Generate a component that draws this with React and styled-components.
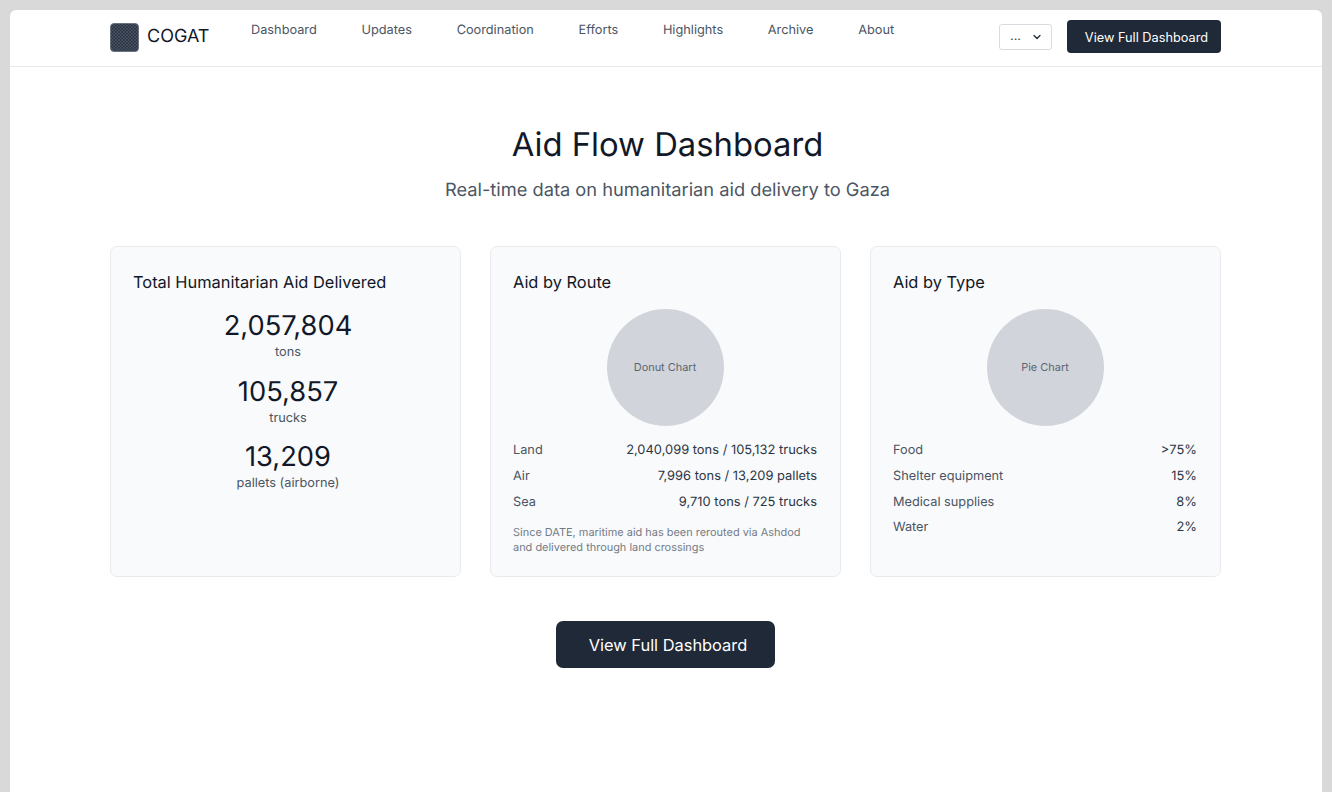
import React from "react";
import styled, { createGlobalStyle } from "styled-components";

const GlobalStyle = createGlobalStyle`
  html, body {
    margin: 0;
    height: 100%;
    background: #d9d9d9;
    font-family: Inter, "Liberation Sans", sans-serif;
    color: #111827;
    overflow: hidden;
    text-rendering: geometricPrecision;
  }
`;

const Page = styled.div`
  margin: 10px 10px 0;
  height: 782px;
  background: #fff;
  border-radius: 6px 6px 0 0;
  overflow: hidden;
`;

const Header = styled.header`
  height: 56px;
  padding: 0 101px 0 100px;
  display: flex;
  align-items: flex-start;
  border-bottom: 1px solid #e8eaee;
`;

const Brand = styled.div`
  display: flex;
  align-items: center;
  gap: 8px;
  margin-top: 12px;
  width: 141px;
  font-size: 18px;
  line-height: 30px;
  color: #111827;
`;

const Logo = styled.div`
  width: 29px;
  height: 29px;
  border-radius: 4px;
  background-color: #4b5563;
  background-image: radial-gradient(#263041 0.75px, transparent 0.85px),
    radial-gradient(#263041 0.75px, transparent 0.85px);
  background-size: 3.2px 3.2px;
  background-position: 0 0, 1.6px 1.6px;
  border: 1px solid #6b7280;
  box-sizing: border-box;
`;

const Nav = styled.nav`
  display: flex;
  gap: 44.7px;
  margin-top: 11px;
`;

const NavLink = styled.a`
  font-size: 12.75px;
  line-height: 20px;
  color: #4b5563;
`;

const HeaderActions = styled.div`
  margin-left: auto;
  display: flex;
  align-items: center;
  gap: 15px;
  margin-top: 10px;
`;

const Select = styled.div`
  width: 53px;
  height: 26px;
  box-sizing: border-box;
  padding: 0 8px 0 10px;
  display: flex;
  align-items: center;
  justify-content: space-between;
  background: #fff;
  border: 1px solid #d8dbe0;
  border-radius: 3px;
  font-size: 12.75px;
  color: #374151;
`;

const Button = styled.button`
  border: 0;
  background: #1f2937;
  color: #fff;
  font-family: inherit;
  font-size: ${(p) => (p.$large ? "16.4px" : "12.75px")};
  width: ${(p) => (p.$large ? "219px" : "154px")};
  height: ${(p) => (p.$large ? "47px" : "33px")};
  border-radius: ${(p) => (p.$large ? "7px" : "4px")};
  padding: ${(p) => (p.$large ? "0 0 0 5px" : "1px 0 0 5px")};
`;

const Main = styled.main`
  padding: 0 101px 0 100px;
`;

const Hero = styled.div`
  text-align: center;
  padding: 56px 0 42px 4px;
`;

const Title = styled.h1`
  margin: 0;
  font-size: 32.8px;
  line-height: 42px;
  font-weight: 400;
  color: #111827;
`;

const Subtitle = styled.p`
  margin: 11px 0 0;
  font-size: 18.25px;
  line-height: 28px;
  color: #4b5563;
`;

const Cards = styled.div`
  display: grid;
  grid-template-columns: repeat(3, 351px);
  gap: 29px;
`;

const Card = styled.section`
  height: 331px;
  box-sizing: border-box;
  padding: 23px 23px 23px 22px;
  background: #f9fafb;
  border: 1px solid #e8eaee;
  border-radius: 7px;
`;

const CardTitle = styled.h2`
  margin: 0;
  font-size: 16.4px;
  line-height: 24px;
  font-weight: 400;
  color: #111827;
`;

const Stats = styled.div`
  margin-top: 14px;
  padding-left: 6px;
  text-align: center;
`;

const Stat = styled.div`
  margin-bottom: 12.7px;
`;

const StatValue = styled.div`
  font-size: 27.3px;
  line-height: 36px;
  color: #111827;
`;

const StatLabel = styled.div`
  font-size: 12.75px;
  line-height: 17px;
  color: #4b5563;
`;

const ChartCircle = styled.div`
  width: 117px;
  height: 117px;
  box-sizing: border-box;
  padding-bottom: 1px;
  margin: 15px auto 12.4px;
  border-radius: 50%;
  background: #d1d5db;
  display: flex;
  align-items: center;
  justify-content: center;
  font-size: 10.95px;
  color: #5b6472;
`;

const Row = styled.div`
  display: flex;
  justify-content: space-between;
  font-size: 12.75px;
  line-height: 25.6px;
  color: #4b5563;
`;

const RowValue = styled.span`
  font-size: 12.9px;
  color: #2b3544;
`;

const Note = styled.p`
  margin: 9.6px 0 0;
  font-size: 10.95px;
  line-height: 15px;
  color: #737a87;
`;

const Footer = styled.div`
  display: flex;
  justify-content: center;
  margin-top: 44px;
`;

const navItems = ["Dashboard", "Updates", "Coordination", "Efforts", "Highlights", "Archive", "About"];

const stats = [
  ["2,057,804", "tons"],
  ["105,857", "trucks"],
  ["13,209", "pallets (airborne)"],
];

const routes = [
  ["Land", "2,040,099 tons / 105,132 trucks"],
  ["Air", "7,996 tons / 13,209 pallets"],
  ["Sea", "9,710 tons / 725 trucks"],
];

const types = [
  ["Food", ">75%"],
  ["Shelter equipment", "15%"],
  ["Medical supplies", "8%"],
  ["Water", "2%"],
];

const Rows = ({ items }) =>
  items.map(([label, value]) => (
    <Row key={label}>
      <span>{label}</span>
      <RowValue>{value}</RowValue>
    </Row>
  ));

export default function App() {
  return (
    <>
      <GlobalStyle />
      <Page>
        <Header>
          <Brand>
            <Logo />
            COGAT
          </Brand>
          <Nav>
            {navItems.map((item) => (
              <NavLink key={item}>{item}</NavLink>
            ))}
          </Nav>
          <HeaderActions>
            <Select>
              ...
              <svg width="12" height="12" viewBox="0 0 24 24" fill="none" stroke="#1f2937" strokeWidth="2.5" strokeLinecap="round" strokeLinejoin="round">
                <path d="m6 9 6 6 6-6" />
              </svg>
            </Select>
            <Button>View Full Dashboard</Button>
          </HeaderActions>
        </Header>
        <Main>
          <Hero>
            <Title>Aid Flow Dashboard</Title>
            <Subtitle>Real-time data on humanitarian aid delivery to Gaza</Subtitle>
          </Hero>
          <Cards>
            <Card>
              <CardTitle>Total Humanitarian Aid Delivered</CardTitle>
              <Stats>
                {stats.map(([value, label]) => (
                  <Stat key={label}>
                    <StatValue>{value}</StatValue>
                    <StatLabel>{label}</StatLabel>
                  </Stat>
                ))}
              </Stats>
            </Card>
            <Card>
              <CardTitle>Aid by Route</CardTitle>
              <ChartCircle>Donut Chart</ChartCircle>
              <Rows items={routes} />
              <Note>Since DATE, maritime aid has been rerouted via Ashdod and delivered through land crossings</Note>
            </Card>
            <Card>
              <CardTitle>Aid by Type</CardTitle>
              <ChartCircle>Pie Chart</ChartCircle>
              <Rows items={types} />
            </Card>
          </Cards>
          <Footer>
            <Button $large>View Full Dashboard</Button>
          </Footer>
        </Main>
      </Page>
    </>
  );
}
